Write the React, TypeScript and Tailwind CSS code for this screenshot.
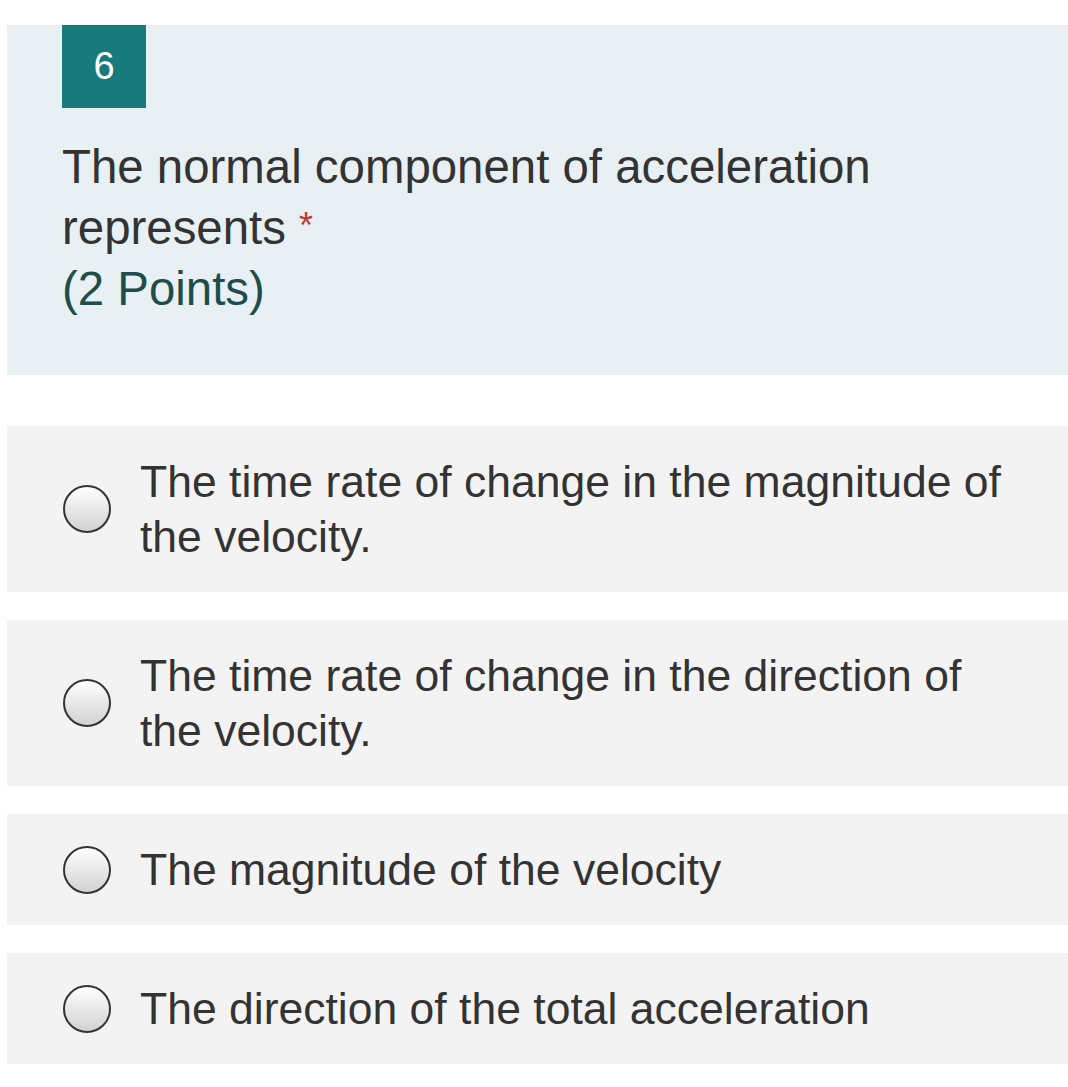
const options = [
  "The time rate of change in the magnitude of the velocity.",
  "The time rate of change in the direction of the velocity.",
  "The magnitude of the velocity",
  "The direction of the total acceleration",
];

const Radio = () => (
  <span className="shrink-0 w-[48px] h-[48px] rounded-full border-[2.5px] border-[#333333] bg-gradient-to-b from-white to-[#d2d2d2]" />
);

export default function App() {
  return (
    <div className="min-h-screen bg-white pt-[25px] pb-[23px] pl-[7px] font-['Liberation_Sans',Arial,sans-serif]">
      <section className="bg-[#e8f0f3] pl-[55px] pr-[40px] pb-[56px]">
        <div className="w-[84px] h-[83px] bg-[#177a7b] text-white text-[38px] flex items-center justify-center">
          6
        </div>
        <div className="mt-[28px] text-[47.4px] leading-[61px] text-[#333333]">
          <p>
            The normal component of acceleration represents{" "}
            <span className="text-[#c0392b] text-[36px] leading-none align-[6px]">*</span>
          </p>
          <p className="text-[#1e4d4b]">(2 Points)</p>
        </div>
      </section>

      <div className="mt-[51px] flex flex-col gap-[28px]">
        {options.map((opt) => (
          <label
            key={opt}
            className="bg-[#f3f3f3] flex items-center gap-[29px] pl-[56px] pr-[50px] py-[28px]"
          >
            <Radio />
            <span className="text-[44.5px] leading-[55px] text-[#333333]">{opt}</span>
          </label>
        ))}
      </div>
    </div>
  );
}
